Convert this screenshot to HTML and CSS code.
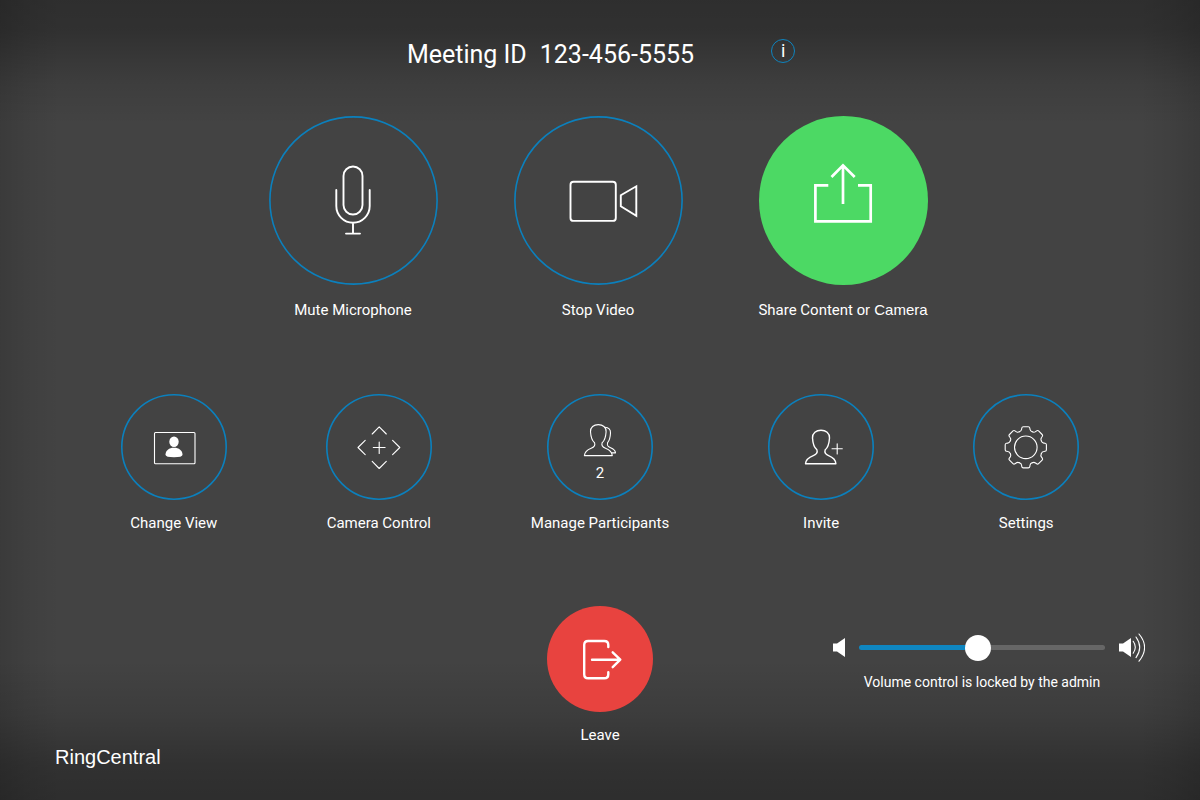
FILE: index.html
```html
<!DOCTYPE html>
<html lang="en">
<head>
  <meta charset="UTF-8">
  <meta name="viewport" content="width=device-width, initial-scale=1.0">
  <title>RingCentral Meeting Controls</title>
  <link rel="stylesheet" href="styles.css">
</head>
<body>
  <div class="app-container">
    <header>
      <h1 class="meeting-title"><span>Meeting ID</span> <span>123-456-5555</span></h1>
      <button class="info-btn" type="button">i</button>
    </header>

    <main>
      <div class="main-controls">
        <button class="control" type="button">
          <svg class="dial-large" viewBox="0 0 169 169" aria-hidden="true">
            <circle class="ring" cx="84.5" cy="84.5" r="83.6"/>
            <g class="icon medium">
              <rect x="74.5" y="50.5" width="19" height="48" rx="9.5"/>
              <path d="M67.3 74V90a16.7 16.7 0 0 0 33.4 0V74M84 106.7V117.6M77 117.6H91"/>
            </g>
          </svg>
          <span class="label">Mute Microphone</span>
        </button>
        <button class="control" type="button">
          <svg class="dial-large" viewBox="0 0 169 169" aria-hidden="true">
            <circle class="ring" cx="84.5" cy="84.5" r="83.6"/>
            <g class="icon medium">
              <rect x="56.5" y="65.7" width="45.3" height="39.2" rx="3"/>
              <path stroke-linejoin="miter" d="M106.8 79.3L122.3 70.3V99.7L106.8 90.2Z"/>
            </g>
          </svg>
          <span class="label">Stop Video</span>
        </button>
        <button class="control" type="button">
          <svg class="dial-large" viewBox="0 0 169 169" aria-hidden="true">
            <circle class="share" cx="84.5" cy="84.5" r="84.5"/>
            <g class="icon sharp">
              <path d="M69.3 69.3H56.4V105.3H111.7V69.3H99M84 88V49M72.5 61L84 49.3L95.7 61"/>
            </g>
          </svg>
          <span class="label">Share Content <span class="label-alt">or Camera</span></span>
        </button>
      </div>

      <div class="more-controls">
        <button class="control" type="button">
          <svg class="dial-small" viewBox="0 0 106 106" aria-hidden="true">
            <circle class="ring" cx="53" cy="53" r="52.2"/>
            <rect class="icon thin" x="33.5" y="38.5" width="40.5" height="31.3" rx="1"/>
            <ellipse class="solid" cx="53" cy="47.8" rx="4.7" ry="5.2"/>
            <path class="solid" d="M44.5 60.8C44.5 56.5 48 53.8 53 53.8S61.5 56.5 61.5 60.8Q61.5 63.3 53 63.3T44.5 60.8Z"/>
          </svg>
          <span class="label">Change View</span>
        </button>
        <button class="control" type="button">
          <svg class="dial-small" viewBox="0 0 106 106" aria-hidden="true">
            <circle class="ring" cx="53" cy="53" r="52.2"/>
            <path class="icon thin" d="M46.2 40L53.2 32.9L60.3 40M46.2 67.4L53.2 74.5L60.3 67.4M39.2 46.3L32 53.5L39.2 60.7M66.6 46.3L73.8 53.5L66.6 60.7M47.3 53.5H59.1M53.2 48V59.5"/>
          </svg>
          <span class="label">Camera Control</span>
        </button>
        <button class="control" type="button">
          <svg class="dial-small" viewBox="0 0 106 106">
            <circle class="ring" cx="53" cy="53" r="52.2"/>
            <g class="icon thin">
              <path d="M37.4 61.6H65.3C65 57.3 62 55.6 58.5 54.2C55.2 52.9 54.2 51.6 55.1 48.8C58.3 46.3 58.8 42.5 59.1 37.8C59.3 33.2 55.9 30.6 51.3 30.6S43.3 33.2 43.5 37.8C43.8 42.5 44.3 46.3 47.6 48.8C48.5 51.6 47.5 52.9 44.2 54.2C40.7 55.6 37.7 57.3 37.4 61.6Z"/>
              <path d="M58 33.2C61.6 33.4 63.7 35.6 63.5 39C63.3 43 62.9 46 60.6 48.6C59.8 51.6 60.6 52.6 63.6 53.8C66.6 55 68.3 56.4 68.5 58.9H64.6"/>
            </g>
            <text class="count" x="53" y="84">2</text>
          </svg>
          <span class="label">Manage Participants</span>
        </button>
        <button class="control" type="button">
          <svg class="dial-small" viewBox="0 0 106 106" aria-hidden="true">
            <circle class="ring" cx="53" cy="53" r="52.2"/>
            <path class="icon thin heavier" d="M37.5 69.7H67.9C67.6 65 64.4 63.2 60.6 61.7C57 60.3 56.2 58.8 57.2 55.8C60.6 53 61.2 49 61.5 44C61.7 39 57.8 36.2 53 36.2S44.3 39 44.5 44C44.8 49 45.4 53 48.9 55.8C49.9 58.8 48.9 60.3 45.3 61.7C41.5 63.2 37.8 65 37.5 69.7Z"/>
            <path class="icon thin" d="M64 54.8H74.3M69.2 49.7V60"/>
          </svg>
          <span class="label">Invite</span>
        </button>
        <button class="control" type="button">
          <svg class="dial-small" viewBox="0 0 106 106" aria-hidden="true">
            <defs>
              <path id="tooth" d="M-6.4 -15.5C-5.2 -15.9 -4.4 -16.4 -4.2 -18L-4 -19.3Q-3.8 -20.6 -2.5 -20.6H2.5Q3.8 -20.6 4 -19.3L4.2 -18C4.4 -16.4 5.2 -15.9 6.4 -15.5"/>
            </defs>
            <circle class="ring" cx="53" cy="53" r="52.2"/>
            <g class="icon thin" transform="translate(52.8 53.3)">
              <circle r="11.3"/>
              <use href="#tooth"/>
              <use href="#tooth" transform="rotate(45)"/>
              <use href="#tooth" transform="rotate(90)"/>
              <use href="#tooth" transform="rotate(135)"/>
              <use href="#tooth" transform="rotate(180)"/>
              <use href="#tooth" transform="rotate(225)"/>
              <use href="#tooth" transform="rotate(270)"/>
              <use href="#tooth" transform="rotate(315)"/>
            </g>
          </svg>
          <span class="label">Settings</span>
        </button>
      </div>
    </main>

    <footer>
      <div class="brand">RingCentral</div>
      <button class="control" type="button">
        <svg class="dial-small" viewBox="0 0 106 106" aria-hidden="true">
          <circle class="leave" cx="53" cy="53" r="53"/>
          <path class="icon bold" d="M61.3 41V39Q61.3 35 57.3 35H41.2Q37.2 35 37.2 39V68.3Q37.2 72.3 41.2 72.3H57.3Q61.3 72.3 61.3 68.3V66.3M45 53.7H73M65.7 46.3L73.3 53.7L65.7 61.2"/>
        </svg>
        <span class="label">Leave</span>
      </button>
      <div class="volume">
        <svg class="speaker-low" viewBox="0 -1 14 30" aria-hidden="true">
          <path class="solid" d="M1 10.6H5L13 5V24L5 18.6H1Z"/>
        </svg>
        <input class="slider" id="volume" type="range" min="0" max="100" value="48" disabled>
        <svg class="speaker-high" viewBox="-1 -1 27 30" aria-hidden="true">
          <path class="solid" d="M0 10.6H4L12 5V24L4 18.6H0Z"/>
          <path class="icon thin" d="M14.2 8.3Q18.4 14.3 14.2 20.2M17 4Q24.4 14.3 17 24.6M20 1Q31.2 14.3 20 28.2"/>
        </svg>
        <label class="volume-note" for="volume">Volume control is locked by the admin</label>
      </div>
    </footer>
  </div>
</body>
</html>
```
FILE: styles.css
```css
body {
  margin: 0;
  font-family: Roboto, "Liberation Sans", sans-serif;
  color: #fff;
  background-color: #434343;
}
.app-container {
  display: flex;
  flex-direction: column;
  min-height: 100vh;
  box-sizing: border-box;
  padding: 39px 55px 33px;
  /* darker towards the edges of the screen */
  background-image:
    linear-gradient(to bottom, rgba(0,0,0,0.31), rgba(0,0,0,0.28) 30px, rgba(0,0,0,0.08) 85px, transparent 125px),
    linear-gradient(to top, rgba(0,0,0,0.32), rgba(0,0,0,0.27) 35px, rgba(0,0,0,0.1) 85px, transparent 140px),
    linear-gradient(to right, rgba(0,0,0,0.13), rgba(0,0,0,0.05) 30px, transparent 60px),
    linear-gradient(to left, rgba(0,0,0,0.13), rgba(0,0,0,0.05) 30px, transparent 60px);
}
header {
  display: flex;
  justify-content: center;
  align-items: flex-start;
  gap: 77px;
  padding-left: 2px;
}
.meeting-title {
  display: flex;
  gap: 13px;
  margin: 0;
  font-size: 25px;
  line-height: 32px;
  font-weight: 400;
}
button {
  padding: 0;
  border: none;
  background: none;
  color: inherit;
  font-family: inherit;
  cursor: pointer;
}
.info-btn {
  width: 24px;
  height: 24px;
  border: 1px solid #0e84bf;
  border-radius: 50%;
  font-size: 18px;
  line-height: 22px;
}
main {
  display: flex;
  flex-direction: column;
  gap: 74px;
  margin: 45px 0 73px;
}
.main-controls,
.more-controls {
  display: flex;
  justify-content: center;
}
.main-controls {
  gap: 76px;
  padding-right: 4px;
}
.more-controls {
  gap: 99px;
}
.control {
  display: flex;
  flex-direction: column;
  align-items: center;
  gap: 13px;
}
.main-controls .control {
  width: 169px;
  gap: 15px;
}
.dial-large {
  display: block;
  width: 169px;
  height: 169px;
}
.dial-small {
  display: block;
  width: 106px;
  height: 106px;
}
.label {
  font-size: 15px;
  line-height: 20px;
  white-space: nowrap;
}
.label-alt {
  font-family: "Liberation Sans", sans-serif;
}

/* icons */
.ring {
  fill: none;
  stroke: #0b80bd;
  stroke-width: 1.6;
}
.share {
  fill: #4cd964;
}
.leave {
  fill: #e8433f;
}
.icon {
  fill: none;
  stroke: #fff;
  stroke-linecap: round;
  stroke-linejoin: round;
}
.thin {
  stroke-width: 1.1;
}
.heavier {
  stroke-width: 1.4;
}
.medium {
  stroke-width: 1.9;
}
.bold {
  stroke-width: 2.4;
}
.sharp {
  stroke-width: 2.7;
  stroke-linecap: butt;
  stroke-linejoin: miter;
}
.solid {
  fill: #fff;
}
.count {
  fill: #fff;
  font-size: 15px;
  text-anchor: middle;
}

footer {
  display: grid;
  grid-template-columns: 1fr auto 1fr;
  min-height: 161px;
}
footer .control {
  align-self: start;
}
.brand {
  align-self: end;
  font-family: "Liberation Sans", sans-serif;
  font-size: 20px;
  line-height: 20px;
}
.volume {
  display: grid;
  grid-template-columns: 14px 246px 27px;
  column-gap: 13px;
  row-gap: 10px;
  align-content: start;
  align-items: center;
  justify-self: end;
  padding-top: 26px;
}
.speaker-low {
  width: 14px;
  height: 30px;
}
.speaker-high {
  width: 27px;
  height: 30px;
}
.slider {
  appearance: none;
  width: 100%;
  height: 26px;
  margin: 0;
  background: none;
}
.slider::-webkit-slider-runnable-track {
  height: 5px;
  border-radius: 3px;
  background: linear-gradient(to right, #0e86c1 48%, #666 48%);
}
.slider::-webkit-slider-thumb {
  appearance: none;
  width: 26px;
  height: 26px;
  margin-top: -10px;
  border-radius: 50%;
  background-color: #fff;
}
.volume-note {
  grid-column: 2;
  justify-self: center;
  font-size: 14px;
  line-height: 20px;
  white-space: nowrap;
}
```
